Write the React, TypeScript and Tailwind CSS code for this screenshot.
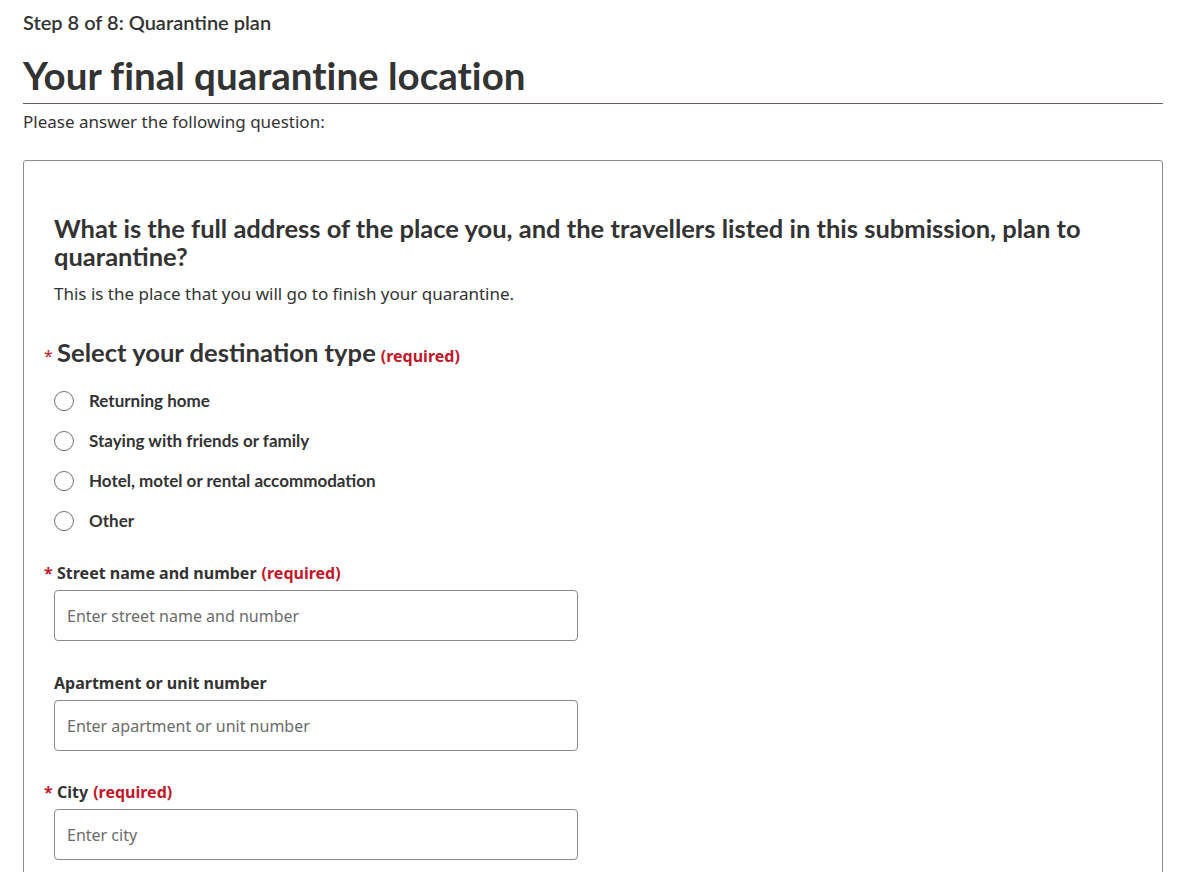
const options = [
  'Returning home',
  'Staying with friends or family',
  'Hotel, motel or rental accommodation',
  'Other',
];

const lato = "font-['Lato','Noto_Sans',sans-serif]";
const noto = "font-['Noto_Sans','Liberation_Sans',sans-serif]";

function Star() {
  return <span className={`w-[13px] shrink-0 text-[16px] text-[#c0182a] ${noto}`}>*</span>;
}

function TextField({ label, placeholder, required }: { label: string; placeholder: string; required?: boolean }) {
  return (
    <div>
      <label className={`flex items-center h-[24px] text-[16px] font-bold text-[#333] ${noto} ${required ? '-ml-[10px]' : ''}`}>
        {required && <Star />}
        <span>{label}</span>
        {required && <span className="ml-[5px] text-[#c0182a]">(required)</span>}
      </label>
      <input
        type="text"
        placeholder={placeholder}
        className={`mt-[5px] block w-[524px] h-[51px] rounded-[4px] border border-[#8a8a8a] bg-white px-[12px] text-[16px] text-[#333] placeholder:text-[#6b6b6b] outline-none ${noto}`}
      />
    </div>
  );
}

export default function App() {
  return (
    <div className="min-h-screen bg-white pl-[23px] pr-[19px] pt-[8px] text-[#333]">
      <p className={`${lato} text-[20px] leading-[28px] font-semibold text-[#333]`}>Step 8 of 8: Quarantine plan</p>
      <h1 className={`${lato} mt-[18px] border-b border-[#6a5a62] pb-[7px] text-[38.5px] leading-[42px] font-bold text-[#333] [font-variant-ligatures:none]`}>
        Your final quarantine location
      </h1>
      <p className={`${noto} mt-[6px] text-[17px] leading-[24px]`}>Please answer the following question:</p>

      <div className="mt-[26px] rounded-[3px] border border-[#8c8c8c] pl-[30px] pr-[30px] pt-[53px] pb-[60px]">
        <h2 className={`${lato} text-[25.5px] leading-[28px] font-bold text-[#333]`}>
          What is the full address of the place you, and the travellers listed in this submission, plan to quarantine?
        </h2>
        <p className={`${noto} mt-[12px] text-[17px] leading-[24px]`}>This is the place that you will go to finish your quarantine.</p>

        <fieldset className="mt-[32px]">
          <legend className="-ml-[10px] flex items-baseline text-[#333]">
            <Star />
            <span className={`${lato} text-[25.6px] leading-[28px] font-bold`}>Select your destination type</span>
            <span className={`${noto} ml-[5px] text-[16px] font-bold text-[#c0182a]`}>(required)</span>
          </legend>
          <div className="mt-[13px]">
            {options.map((o) => (
              <label key={o} className="flex h-[40px] items-center gap-[15px]">
                <span className="h-[20px] w-[20px] rounded-full border border-[#6f6f6f] bg-white" />
                <span className={`${lato} text-[17px] font-bold text-[#333]`}>{o}</span>
              </label>
            ))}
          </div>
        </fieldset>

        <div className="mt-[20px]">
          <TextField label="Street name and number" placeholder="Enter street name and number" required />
        </div>
        <div className="mt-[30px]">
          <TextField label="Apartment or unit number" placeholder="Enter apartment or unit number" />
        </div>
        <div className="mt-[29px]">
          <TextField label="City" placeholder="Enter city" required />
        </div>
      </div>
    </div>
  );
}
